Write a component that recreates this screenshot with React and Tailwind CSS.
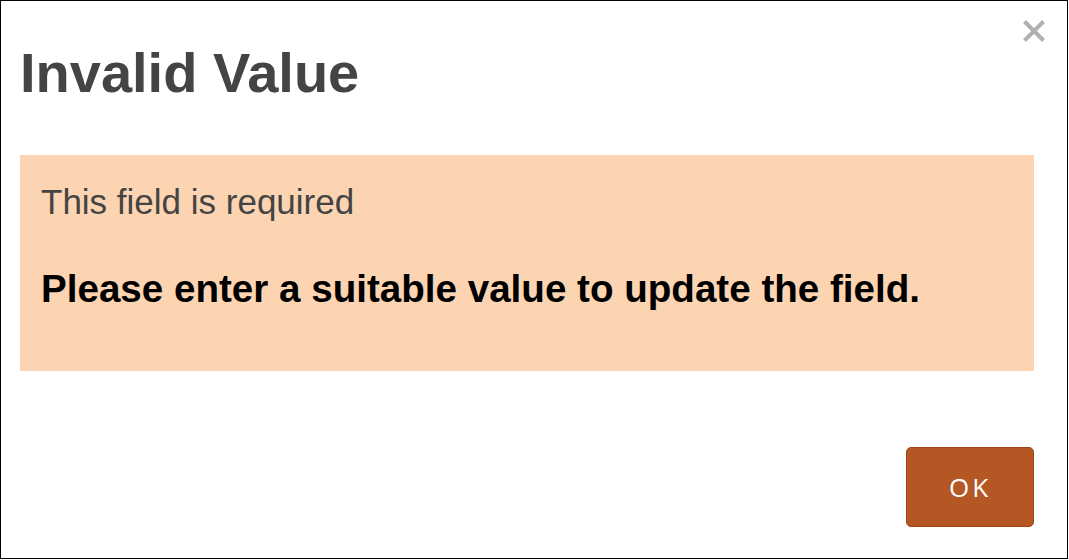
export default function App() {
  return (
    <div className="w-[1068px] h-[559px] border border-black bg-white relative flex flex-col font-['Liberation_Sans',Arial,sans-serif]">
      {/* close */}
      <button className="absolute top-[18px] left-[1021px] w-[24px] h-[24px] flex items-center justify-center text-[#b0b0b0]">
        <svg width="24" height="24" viewBox="0 0 24 24" fill="none">
          <path d="M2.5 2.5 L21.5 21.5 M21.5 2.5 L2.5 21.5" stroke="currentColor" strokeWidth="4" />
        </svg>
      </button>

      <h1 className="mt-[44px] pl-[19px] text-[56px] leading-none font-bold text-[#444444]">
        Invalid Value
      </h1>

      {/* message */}
      <div className="mt-[54px] ml-[19px] w-[1014px] h-[216px] bg-[#fcd4b2] pt-[29px] pl-[21px]">
        <p className="text-[35px] leading-none text-[#444444]">This field is required</p>
        <p className="mt-[51px] text-[38.6px] leading-none font-bold text-black">
          Please enter a suitable value to update the field.
        </p>
      </div>

      <div className="flex justify-end mt-[76px] mr-[33px]">
        <button className="w-[128px] h-[80px] rounded-[5px] border border-[#a3430f] bg-[#b55725] text-white text-[26px] tracking-[3px] font-['Open_Sans',sans-serif] flex items-center justify-center">
          OK
        </button>
      </div>
    </div>
  );
}
